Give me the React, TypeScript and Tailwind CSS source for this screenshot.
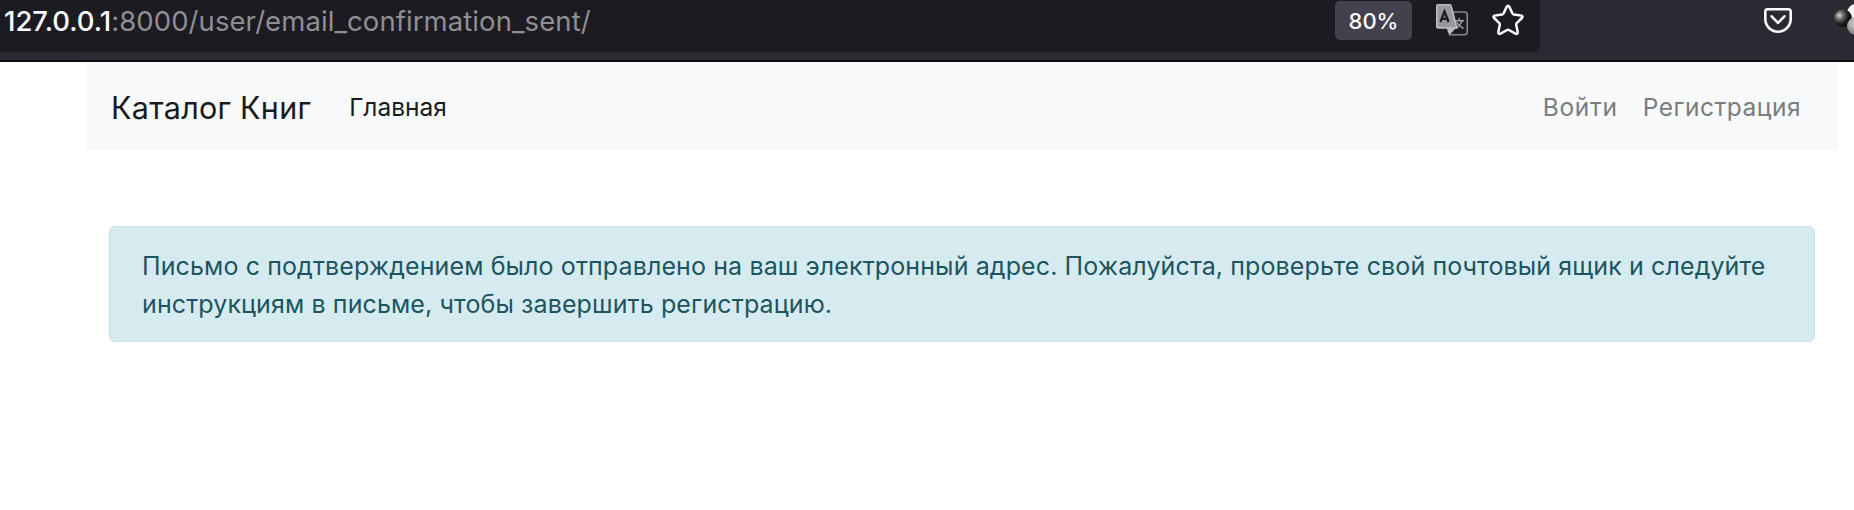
function TranslateIcon() {
  return (
    <svg width="44" height="42" viewBox="0 0 44 42" fill="none" className="shrink-0">
      <path d="M22 12H34.5Q37.2 12 37.2 14.7V32Q37.2 34.8 34.5 34.8H19" stroke="#88878c" strokeWidth="1.6" />
      <path d="M24.5 20.8H34M29.3 18V20.8M32 21Q30 26 25 28.5M26.5 22Q29 26.5 33.5 28.5" stroke="#a09fa4" strokeWidth="1.5" />
      <path d="M16.5 28H26L19.2 35.2Z" fill="#bcbcbe" />
      <path d="M8.5 4H19.5Q21.2 4 21.7 5.8L27.6 28.6H8Q6 28.6 6 26.6V6.5Q6 4 8.5 4Z" fill="#98979b" />
      <path d="M6.8 25V6.5Q6.8 4.8 8.5 4.8H19.5Q20.6 4.8 21 6L26.8 27.8H8.5Q6.8 27.8 6.8 26Z" stroke="#bcbcbe" strokeWidth="1.6" />
      <path d="M10.4 22L14.5 11.5L18.6 22M11.7 18.8H17.3" stroke="#1c1b22" strokeWidth="2.3" />
    </svg>
  );
}

function StarIcon() {
  return (
    <svg width="44" height="42" viewBox="0 0 44 42" fill="none" stroke="#fbfbfe" strokeWidth="2.5" strokeLinejoin="round" className="shrink-0">
      <path d="M20.7 6.8Q22 4.8 23.3 6.8L26.4 13.4Q26.8 14.4 27.8 14.5L35 15.4Q37.6 16 35.9 18L30.7 23.1Q30 23.8 30.2 24.8L31.7 32Q31.9 34.6 29.5 33.6L22.9 30Q22 29.5 21.1 30L14.5 33.6Q12.1 34.6 12.3 32L13.8 24.8Q14 23.8 13.3 23.1L8.1 18Q6.4 16 9 15.4L16.2 14.5Q17.2 14.4 17.6 13.4Z" />
    </svg>
  );
}

function PocketIcon() {
  return (
    <svg width="44" height="42" viewBox="0 0 44 42" fill="none" stroke="#fbfbfe" strokeWidth="2.6" strokeLinecap="round" strokeLinejoin="round" className="shrink-0">
      <path d="M11.5 9.3H32.5Q34.7 9.3 34.7 11.5V19A12.7 12.7 0 0 1 9.3 19V11.5Q9.3 9.3 11.5 9.3Z" />
      <path d="M15.6 16.3L22 22.8L28.4 16.3" />
    </svg>
  );
}

function SpheresIcon() {
  return (
    <svg width="32" height="42" viewBox="0 0 32 42" className="shrink-0">
      <defs>
        <radialGradient id="darkSphere" cx="0.3" cy="0.35" r="0.65">
          <stop offset="0" stopColor="#d8d8d8" />
          <stop offset="0.3" stopColor="#777777" />
          <stop offset="0.7" stopColor="#242424" />
          <stop offset="1" stopColor="#080808" />
        </radialGradient>
        <radialGradient id="graySphere" cx="0.4" cy="0.35" r="0.65">
          <stop offset="0" stopColor="#d0d0d0" />
          <stop offset="1" stopColor="#777777" />
        </radialGradient>
      </defs>
      <circle cx="34" cy="13" r="9" fill="#f4f4f4" />
      <circle cx="21" cy="18" r="8.8" fill="url(#darkSphere)" />
      <circle cx="34" cy="26" r="9" fill="url(#graySphere)" />
    </svg>
  );
}

export default function App() {
  return (
    <div className="flex h-[510px] w-[1854px] flex-col overflow-hidden bg-white font-['Inter',sans-serif]">
      <header className="flex h-[62px] shrink-0 border-b-2 border-[#0c0c0d] bg-[#2b2a33]">
        <div className="flex h-[52px] w-[1540px] shrink-0 items-start rounded-br-[6px] bg-[#1c1b22] pl-[4px]">
          <p className="flex text-[27.5px] leading-[42px] text-[#8f8f94]">
            <span className="font-medium text-[#fbfbfe]">127.0.0.1</span>
            <span className="tracking-[0.08px]">:8000/user/email_confirmation_sent/</span>
          </p>
          <div className="ml-auto mt-px flex h-[39px] w-[77px] items-center justify-center rounded-[5px] bg-[#42414d] pt-px text-[22px] font-medium text-[#fbfbfe]">
            <span>80%</span>
          </div>
          <div className="ml-[18px] mr-[10px] flex gap-[12px]">
            <TranslateIcon />
            <StarIcon />
          </div>
        </div>
        <div className="ml-auto flex gap-[22px]">
          <PocketIcon />
          <SpheresIcon />
        </div>
      </header>
      <nav className="ml-[86px] flex h-[88px] w-[1752px] shrink-0 items-center bg-[#f8f9fa] px-[24px] pt-[3px] text-[24.5px] text-[#7b7c7d]">
        <span className="ml-px text-[30.5px] tracking-[0.3px] text-[#1b1b1b]">Каталог Книг</span>
        <span className="ml-[38px] text-[#1b1b1b]">Главная</span>
        <span className="ml-auto tracking-[0.7px]">Войти</span>
        <span className="ml-[25px] mr-[13px] tracking-[0.5px]">Регистрация</span>
      </nav>
      <main className="ml-[109px] mt-[76px] h-[116px] w-[1706px] rounded-[6px] border border-[#bee5eb] bg-[#d6ebf0] pl-[32px] pt-[20px] text-[25px] leading-[38px] tracking-[0.11px] text-[#1c5460]">
        <p className="whitespace-nowrap"><span>Письмо с подтверждением было отправлено на ваш электронный адрес. Пожалуйста, проверьте свой почтовый ящик и следуйте</span></p>
        <p><span>инструкциям в письме, чтобы завершить регистрацию.</span></p>
      </main>
    </div>
  );
}
